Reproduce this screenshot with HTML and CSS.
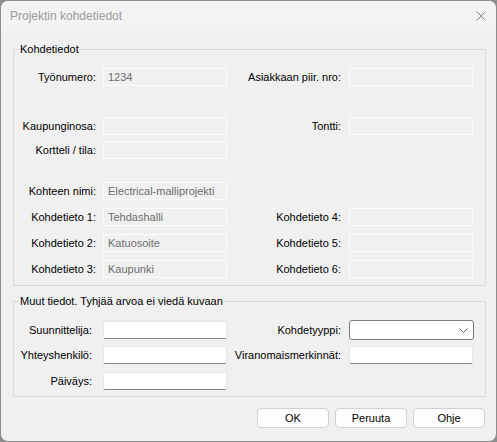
FILE: index.html
```html
<!DOCTYPE html>
<html lang="fi">
<head>
<meta charset="utf-8">
<title>Projektin kohdetiedot</title>
<link rel="stylesheet" href="styles.css">
</head>
<body>
<div class="window">
  <div class="titlebar">
    <span class="title">Projektin kohdetiedot</span>
    <svg class="close" width="10" height="10" viewBox="0 0 10 10"><path d="M0.5 0.5 L9.5 9.5 M9.5 0.5 L0.5 9.5" stroke="#8a8a8a" stroke-width="1" fill="none"/></svg>
  </div>
  <div class="content">
    <fieldset class="group">
      <legend>Kohdetiedot</legend>
      <div class="row first">
        <span class="lbl">Työnumero:</span><div class="field ro">1234</div>
        <span class="lbl lbl-r">Asiakkaan piir. nro:</span><div class="field ro"></div>
      </div>
      <div class="row gap-lg">
        <span class="lbl">Kaupunginosa:</span><div class="field ro"></div>
        <span class="lbl lbl-r">Tontti:</span><div class="field ro"></div>
      </div>
      <div class="row gap-sm">
        <span class="lbl">Kortteli / tila:</span><div class="field ro"></div>
      </div>
      <div class="row gap-xl">
        <span class="lbl">Kohteen nimi:</span><div class="field ro">Electrical-malliprojekti</div>
      </div>
      <div class="row">
        <span class="lbl">Kohdetieto 1:</span><div class="field ro">Tehdashalli</div>
        <span class="lbl lbl-r">Kohdetieto 4:</span><div class="field ro"></div>
      </div>
      <div class="row">
        <span class="lbl">Kohdetieto 2:</span><div class="field ro">Katuosoite</div>
        <span class="lbl lbl-r">Kohdetieto 5:</span><div class="field ro"></div>
      </div>
      <div class="row">
        <span class="lbl">Kohdetieto 3:</span><div class="field ro">Kaupunki</div>
        <span class="lbl lbl-r">Kohdetieto 6:</span><div class="field ro"></div>
      </div>
    </fieldset>
    <fieldset class="group group2">
      <legend>Muut tiedot. Tyhjää arvoa ei viedä kuvaan</legend>
      <div class="row first">
        <span class="lbl lbl-w">Suunnittelija:</span><div class="field edit"></div>
        <span class="lbl lbl-r">Kohdetyyppi:</span>
        <div class="combo"><svg width="9" height="5" viewBox="0 0 9 5"><path d="M0.5 0.5 L4.5 4.5 L8.5 0.5" stroke="#606060" stroke-width="1" fill="none"/></svg></div>
      </div>
      <div class="row">
        <span class="lbl lbl-w">Yhteyshenkilö:</span><div class="field edit"></div>
        <span class="lbl lbl-r">Viranomaismerkinnät:</span><div class="field edit"></div>
      </div>
      <div class="row">
        <span class="lbl lbl-w">Päiväys:</span><div class="field edit"></div>
      </div>
    </fieldset>
    <div class="buttons">
      <button class="btn">OK</button>
      <button class="btn">Peruuta</button>
      <button class="btn">Ohje</button>
    </div>
  </div>
</div>
</body>
</html>
```
FILE: styles.css
```css
html, body {
  margin: 0;
  padding: 0;
  background: #8d8d8d;
}
.window {
  width: 497px;
  height: 442px;
  box-sizing: border-box;
  border: 1px solid #8c8c8c;
  border-radius: 8px;
  background: #f0f0f0;
  overflow: hidden;
  font-family: "Liberation Sans", Arial, sans-serif;
  font-size: 11px;
  color: #000;
}
.titlebar {
  height: 30px;
  background: #f3f3f3;
  display: flex;
  align-items: center;
  justify-content: space-between;
  padding: 0 10px 0 9px;
}
.title {
  font-size: 12px;
  color: #9a9a9a;
}
.close {
  display: block;
  margin-top: -1px;
}
.content {
  padding: 11px 10px 0 12px;
}
.group {
  margin: 0;
  padding: 0 0 7px;
  border: 1px solid #d9d9d9;
  min-width: 0;
}
.group2 {
  margin-top: 8px;
  padding-bottom: 6px;
}
.group legend {
  margin-left: 5px;
  padding: 0 1px;
  height: 15px;
  line-height: 15px;
}
.row {
  display: grid;
  grid-template-columns: 89px 124px 122px 124px;
  height: 18px;
  align-items: center;
  margin-top: 8px;
}
.row.first { margin-top: 11px; }
.row.gap-lg { margin-top: 31px; }
.row.gap-sm { margin-top: 6px; }
.row.gap-xl { margin-top: 23px; }
.lbl {
  text-align: right;
  padding-right: 7px;
  white-space: nowrap;
}
.lbl-w { padding-right: 11px; }
.lbl-r { padding-right: 8px; }
.field {
  height: 18px;
  box-sizing: border-box;
  border: 1px solid #fbfbfb;
  padding: 0 4px;
  line-height: 16px;
  white-space: nowrap;
  overflow: hidden;
}
.ro {
  background: #f0f0f0;
  color: #6d6d6d;
}
.edit {
  background: #fff;
  border-color: #e6e6e6;
  border-bottom-color: #868686;
  border-radius: 2px;
}
.combo {
  width: 125px;
  height: 20px;
  box-sizing: border-box;
  border: 1px solid #7a7a7a;
  border-radius: 3px;
  background: #fff;
  display: flex;
  justify-content: flex-end;
  align-items: center;
  padding-right: 5px;
}
.combo svg { display: block; }
.buttons {
  display: flex;
  justify-content: flex-end;
  gap: 6px;
  margin-top: 11px;
  margin-right: 1px;
}
.btn {
  width: 72px;
  height: 20px;
  box-sizing: border-box;
  border: 1px solid #d0d0d0;
  border-radius: 4px;
  background: #fdfdfd;
  font-family: "Liberation Sans", Arial, sans-serif;
  font-size: 11px;
  color: #000;
  padding: 0;
}
```
